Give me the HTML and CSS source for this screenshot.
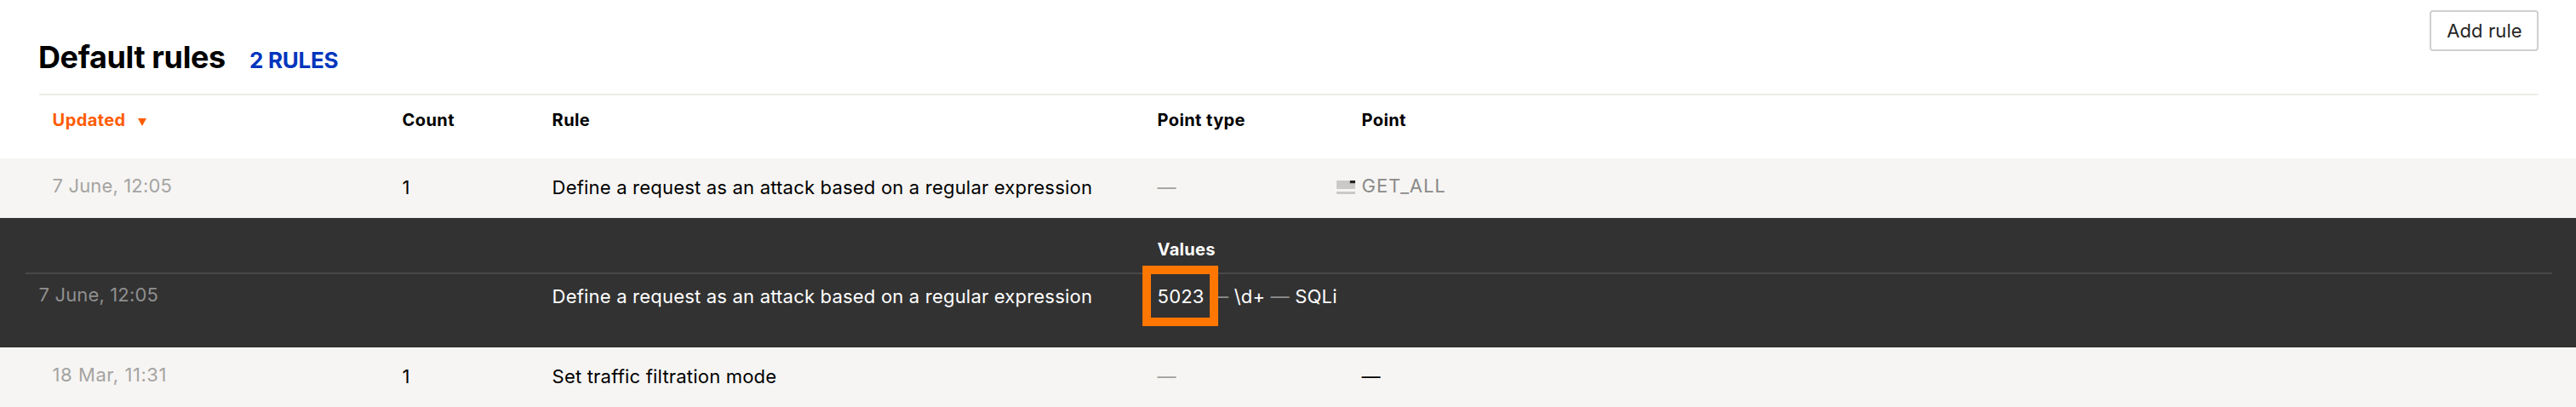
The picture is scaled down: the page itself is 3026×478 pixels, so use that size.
FILE: index.html
```html
<!DOCTYPE html>
<html lang="en">
<head>
<meta charset="utf-8">
<title>Default rules</title>
<link rel="stylesheet" href="styles.css">
</head>
<body>
<header class="header">
  <h1 class="title">Default rules</h1>
  <span class="total">2 RULES</span>
  <button class="add-button" type="button">Add rule</button>
</header>
<main class="table">
  <div class="row head">
    <div class="sorted">Updated<svg class="sort-icon" width="10" height="9" viewBox="0 0 10 9"><path d="M0 0h10L5 9z" fill="currentColor"/></svg></div>
    <div>Count</div>
    <div>Rule</div>
    <div>Point type</div>
    <div>Point</div>
  </div>
  <div class="row item">
    <div class="date">7 June, 12:05</div>
    <div>1</div>
    <div>Define a request as an attack based on a regular expression</div>
    <div class="muted">—</div>
    <div class="point"><svg class="point-icon" width="22" height="16" viewBox="0 0 22 16"><path d="M0 0h22v10H0zM0 13h22v3H0z" fill="#cac9c7"/><path d="M15 0h7v4h-7z" fill="#aaa9a7"/><path d="M16 0h6v3h-6z" fill="#222"/></svg>GET_ALL</div>
  </div>
  <section class="details">
    <div class="row details-head"><div class="values">Values</div></div>
    <div class="row details-row">
      <div class="date">7 June, 12:05</div>
      <div class="details-rule">Define a request as an attack based on a regular expression</div>
      <div class="details-value"><span class="marked">5023</span> <span class="muted">—</span> \d+ <span class="muted">—</span> SQLi</div>
    </div>
  </section>
  <div class="row item">
    <div class="date date-wide">18 Mar, 11:31</div>
    <div>1</div>
    <div>Set traffic filtration mode</div>
    <div class="muted">—</div>
    <div>—</div>
  </div>
</main>
</body>
</html>
```

FILE: styles.css
```css
*, *::after { box-sizing: border-box; }
body {
  margin: 0;
  background: #fff;
  color: #000;
  font: 400 22px/28px Inter, "Liberation Sans", sans-serif;
  letter-spacing: 0.2px;
}
.header {
  display: flex;
  align-items: flex-start;
  height: 112px;
  margin: 0 44px 0 46px;
  border-bottom: 2px solid #edede9;
}
.title {
  margin: 45px 0 0 -1px;
  font-size: 36px;
  line-height: 44px;
  font-weight: 700;
  letter-spacing: -0.38px;
}
.total {
  margin: 51px 0 0 28px;
  color: #0035bd;
  font-size: 26px;
  line-height: 40px;
  font-weight: 700;
  letter-spacing: -0.25px;
}
.add-button {
  width: 128px;
  height: 48px;
  margin: 12px 0 0 auto;
  padding: 0 0 1px 1px;
  border: 2px solid #d0d0d0;
  border-radius: 4px;
  background: #fff;
  color: #262626;
  font: inherit;
  letter-spacing: 0.1px;
}
.row {
  display: grid;
  grid-template-columns: 411px 176px 711px 240px 1fr;
  padding-left: 61.6px;
  white-space: nowrap;
}
.head {
  height: 74px;
  padding-top: 15px;
  font-size: 20px;
  font-weight: 700;
  letter-spacing: 0.4px;
}
.sorted { color: #ff5c00; }
.sort-icon { margin-left: 14px; }
.item {
  height: 70px;
  padding-top: 20px;
  background: #f6f5f3;
}
.date {
  margin-top: -2px;
  color: #a5a4a2;
  letter-spacing: 0.14px;
}
.date-wide { letter-spacing: 0.55px; }
.muted { color: #a09f9d; }
.point {
  display: flex;
  margin: -2px 0 0 -29.6px;
  color: #8b8a89;
  letter-spacing: 0.9px;
}
.point-icon { margin: 8px 7.6px 0 0; }
.details {
  height: 152px;
  background: #323232;
  color: #fff;
}
.details-head {
  height: 66px;
  margin: 0 28px 0 30px;
  padding: 23px 0 0 31.6px;
  border-bottom: 2px solid #484848;
}
.values {
  grid-column: 4;
  font-size: 20px;
  font-weight: 700;
  letter-spacing: 0.3px;
}
.details-row { padding-top: 12px; }
.details-row .date {
  margin-left: -16px;
  color: #8f8f8f;
}
.details-row .muted { color: #8f8f8f; }
.details-rule { grid-column: 3; }
.marked { position: relative; }
.marked::after {
  content: "";
  position: absolute;
  top: -23px;
  left: -17.6px;
  width: 89px;
  height: 71px;
  border: 10px solid #ff7700;
}
```
